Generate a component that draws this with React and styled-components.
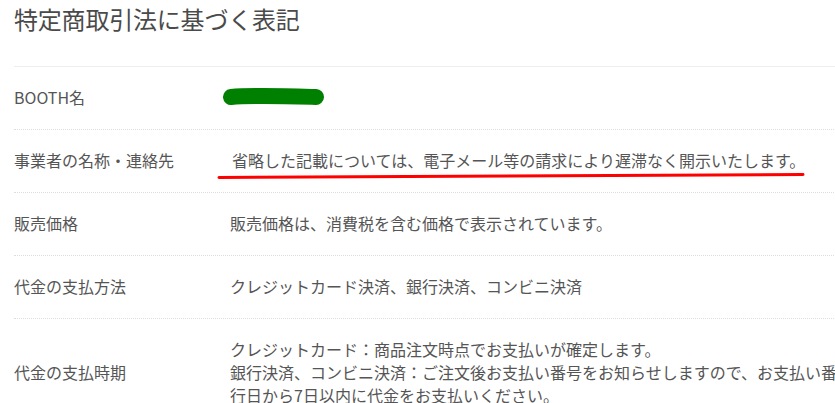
import styled, { createGlobalStyle } from "styled-components";

const GlobalStyle = createGlobalStyle`
  body {
    margin: 0;
    background: #fff;
    overflow: hidden;
    font-family: "Noto Sans CJK JP", "Noto Sans", sans-serif;
  }
`;

const rows = [
  { id: "name", label: "BOOTH名", redacted: true },
  {
    id: "contact",
    label: "事業者の名称・連絡先",
    lines: ["省略した記載については、電子メール等の請求により遅滞なく開示いたします。"],
    marked: true,
    indent: 2,
  },
  {
    id: "price",
    label: "販売価格",
    lines: ["販売価格は、消費税を含む価格で表示されています。"],
  },
  {
    id: "method",
    label: "代金の支払方法",
    lines: ["クレジットカード決済、銀行決済、コンビニ決済"],
  },
  {
    id: "timing",
    label: "代金の支払時期",
    lines: [
      "クレジットカード：商品注文時点でお支払いが確定します。",
      "銀行決済、コンビニ決済：ご注文後お支払い番号をお知らせしますので、お支払い番号発行日から7日以内に代金をお支払いください。",
    ],
  },
];

export default function App() {
  return (
    <>
      <GlobalStyle />
      <Page>
        <Title>特定商取引法に基づく表記</Title>
        <List>
          {rows.map(({ id, label, lines, redacted, marked, indent }) => (
            <Row key={id}>
              <Label>{label}</Label>
              <Value $indent={indent}>
                {redacted && (
                  <Redaction width="104" height="20" viewBox="0 0 104 20">
                    <path
                      d="M9 9 C30 7 60 8 94 9"
                      stroke="#008000"
                      strokeWidth="16"
                      strokeLinecap="round"
                      fill="none"
                    />
                  </Redaction>
                )}
                {lines && lines.map((line, i) => <Line key={i}>{line}</Line>)}
              </Value>
              {marked && (
                <Underline width="590" height="8" viewBox="0 0 590 8">
                  <path
                    d="M2 5.5 L586 2.5"
                    stroke="#ff0000"
                    strokeWidth="3"
                    strokeLinecap="round"
                    fill="none"
                  />
                </Underline>
              )}
            </Row>
          ))}
        </List>
      </Page>
    </>
  );
}

const Page = styled.div`
  width: 880px;
  padding: 0 0 0 14px;
`;

const Title = styled.h1`
  margin: 0;
  padding: 3px 0 0;
  height: 63px;
  font-size: 24px;
  line-height: 32px;
  font-weight: 400;
  color: #4a4a4a;
  letter-spacing: -0.2px;
`;

const List = styled.div`
  border-top: 1px solid #eeeeee;
`;

const Row = styled.div`
  position: relative;
  display: grid;
  grid-template-columns: 216px 646px;
  align-items: center;
  padding: 19px 0 20px;
  border-bottom: 1px dotted #dddddd;
  font-size: 16px;
  line-height: 23px;
  color: #555555;
`;

const Label = styled.div`
  white-space: nowrap;
`;

const Value = styled.div`
  padding-left: ${({ $indent }) => $indent || 0}px;
`;

const Line = styled.div``;

const Redaction = styled.svg`
  display: block;
  margin: 0 0 0 -8px;
`;

const Underline = styled.svg`
  position: absolute;
  left: 203px;
  top: 42px;
`;
